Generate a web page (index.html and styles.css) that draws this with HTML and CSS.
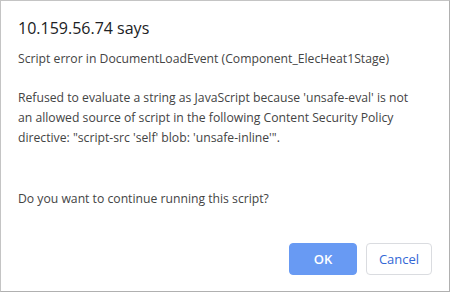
FILE: index.html
```html
<!DOCTYPE html>
<html>
<head>
<meta charset="utf-8">
<link rel="stylesheet" href="styles.css">
</head>
<body>
<div class="dialog">
  <div class="title">10.159.56.74 says</div>
  <div class="message">
    <p>Script error in DocumentLoadEvent (Component_ElecHeat1Stage)</p>
    <p class="gap">Refused to evaluate a string as JavaScript because 'unsafe-eval' is not<br>an allowed source of script in the following Content Security Policy<br>directive: "script-src 'self' blob: 'unsafe-inline'".</p>
    <p class="gap2">Do you want to continue running this script?</p>
  </div>
  <div class="buttons">
    <button class="btn ok">OK</button>
    <button class="btn cancel">Cancel</button>
  </div>
</div>
</body>
</html>
```

FILE: styles.css
```css
html, body {
  margin: 0;
  padding: 0;
  background: #ffffff;
}
.dialog {
  box-sizing: border-box;
  width: 450px;
  height: 292px;
  border: 1px solid #c4c4c4;
  border-right-color: #b0b0b0;
  border-bottom-color: #b0b0b0;
  padding: 16px 17px 16px 17px;
  font-family: "Open Sans", "Noto Sans", sans-serif;
  color: #333333;
  display: flex;
  flex-direction: column;
}
.title {
  font-size: 16px;
  line-height: 22px;
  color: #202124;
}
.message {
  font-size: 12.2px;
  line-height: 20px;
  color: #444444;
  margin-top: 10px;
  flex: 1;
  white-space: nowrap;
}
.message p {
  margin: 0;
}
.message .gap {
  margin-top: 19px;
}
.message .gap2 {
  margin-top: 41px;
}
.buttons {
  display: flex;
  justify-content: flex-end;
  gap: 9px;
  padding-right: 0;
}
.btn {
  box-sizing: border-box;
  height: 32px;
  border-radius: 4px;
  font-family: "Open Sans", "Noto Sans", sans-serif;
  font-size: 13px;
  font-weight: 600;
  padding: 0;
}
.ok {
  width: 68px;
  background: #689af3;
  border: 1px solid #689af3;
  color: #ffffff;
}
.cancel {
  width: 66px;
  background: #ffffff;
  border: 1px solid #dadce0;
  color: #3367d6;
  font-weight: 500;
}
```
